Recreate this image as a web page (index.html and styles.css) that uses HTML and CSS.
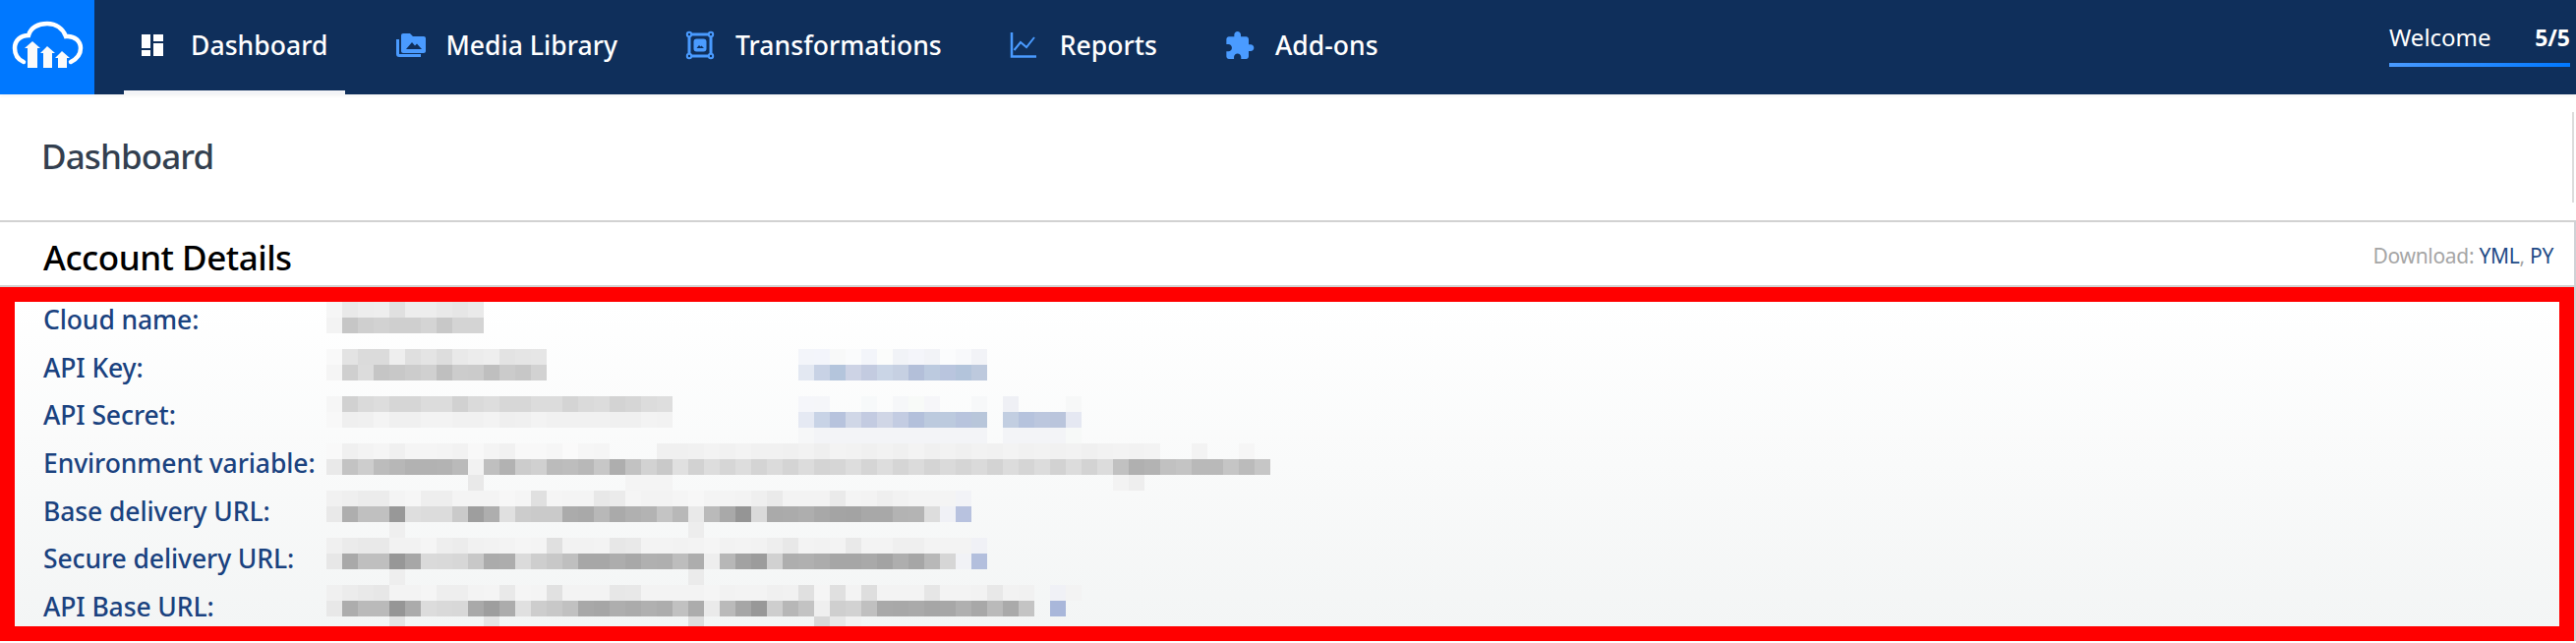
FILE: index.html
```html
<!DOCTYPE html>
<html lang="en">
<head>
<meta charset="utf-8">
<title>Dashboard</title>
<link rel="stylesheet" href="styles.css">
</head>
<body>
<header class="topbar">
  <a class="logo" href="#" aria-label="Cloudinary">
    <svg class="logo-svg" viewBox="0 0 96 96">
      <path class="logo-cloud" d="M24 63C17 60 15 54 15 49C15 41 21 36 29 36C31 28 39 24 48 24C57 24 64 29 67 37C76 36 82 42 82 49C82 55 78 60 72 63"/>
      <path class="logo-arrow" d="M25 49L33 42L41 49H38V69H28V49Z"/>
      <path class="logo-arrow" d="M41 54L48 47L56 54H53V69H44V54Z"/>
      <path class="logo-arrow" d="M56 59L63 52L71 59H68V69H59V59Z"/>
    </svg>
  </a>
  <nav class="mainnav">
    <a class="navitem is-active" href="#">
      <svg class="navicon" viewBox="0 0 30 22"><path class="tile" d="M0 0H9V14H0ZM0 16H9V22H0ZM12 0H22V7H12ZM12 9H22V22H12Z"/></svg>
      <span>Dashboard</span>
    </a>
    <a class="navitem" href="#">
      <svg class="navicon" viewBox="0 0 30 24"><path class="blue" d="M5 2C5 .9 5.900 0 7 0H14L17 3H28C29.100 3 30 3.900 30 5V18C30 19.100 29.100 20 28 20H7C5.900 20 5 19.100 5 18Z"/><path class="dark" d="M10 16L16 9L19 12.500L21 10.500L26 16Z"/><path class="blue-line" d="M1.500 6V21C1.500 22 2 22.500 3 22.500H25"/></svg>
      <span>Media Library</span>
    </a>
    <a class="navitem" href="#">
      <svg class="navicon" viewBox="0 0 30 28"><rect class="blue-line" x="3" y="3" width="22" height="22"/><rect class="navy" x="1" y="1" width="5" height="5"/><rect class="navy" x="22" y="1" width="5" height="5"/><rect class="navy" x="1" y="22" width="5" height="5"/><rect class="navy" x="22" y="22" width="5" height="5"/><rect class="blue" x="7.500" y="7.500" width="13" height="13" rx="3"/><path class="dark" d="M10.500 17L13 14L14.500 15.500L15.500 14.500L18 17Z"/><circle class="ring" cx="3" cy="3" r="2.200"/><circle class="ring" cx="25" cy="3" r="2.200"/><circle class="ring" cx="3" cy="25" r="2.200"/><circle class="ring" cx="25" cy="25" r="2.200"/></svg>
      <span>Transformations</span>
    </a>
    <a class="navitem" href="#">
      <svg class="navicon" viewBox="0 0 30 26"><path class="chart-axis" d="M1 0V24.500H26"/><path class="chart-line" d="M3.500 18L10 10L16 15L24 5"/></svg>
      <span>Reports</span>
    </a>
    <a class="navitem" href="#">
      <svg class="navicon" viewBox="2 1 22 21"><path class="blue" d="M20.500 11H19V7C19 5.900 18.100 5 17 5H13V3.500C13 2.120 11.880 1 10.500 1S8 2.120 8 3.500V5H4C2.900 5 2.010 5.900 2.010 7V10.800H3.500C4.990 10.800 6.200 12.010 6.200 13.500S4.990 16.200 3.500 16.200H2V20C2 21.100 2.900 22 4 22H7.800V20.500C7.800 19.010 9.010 17.800 10.500 17.800C11.990 17.800 13.200 19.010 13.200 20.500V22H17C18.100 22 19 21.100 19 20V16H20.500C21.880 16 23 14.880 23 13.500S21.880 11 20.500 11Z"/></svg>
      <span>Add-ons</span>
    </a>
  </nav>
  <div class="welcome">
    <div class="welcome-text"><span>Welcome</span><strong>5/5</strong></div>
    <div class="welcome-bar"></div>
  </div>
</header>

<section class="pagetitle">
  <h1>Dashboard</h1>
</section>

<section class="card">
  <div class="card-head">
    <h2>Account Details</h2>
    <p class="download">Download: <a href="#">YML</a>, <a href="#">PY</a></p>
  </div>
  <div class="details">
    <div class="detail-row">Cloud name:</div>
    <div class="detail-row">API Key:</div>
    <div class="detail-row">API Secret:</div>
    <div class="detail-row">Environment variable:</div>
    <div class="detail-row">Base delivery URL:</div>
    <div class="detail-row">Secure delivery URL:</div>
    <div class="detail-row">API Base URL:</div>
    <canvas class="mosaic" id="mosaic" width="60" height="21"></canvas>
    <div class="highlight"></div>
  </div>
</section>
<script src="mosaic.js"></script>
</body>
</html>
```

FILE: styles.css
```css
* { box-sizing: border-box; }
html, body { margin: 0; padding: 0; background: #fff; }
body {
  width: 2620px;
  height: 654px;
  overflow: hidden;
  font-family: "Noto Sans", "Open Sans", sans-serif;
}
a { text-decoration: none; color: inherit; }

.topbar {
  display: flex;
  height: 96px;
  background: #0f2f5b;
  color: #fff;
  box-shadow: 0 2px 3px rgba(0, 0, 0, .04);
}
.logo { width: 96px; height: 96px; background: #0078ff; display: block; }
.logo-svg { display: block; width: 96px; height: 96px; }
.logo-cloud { fill: none; stroke: #fff; stroke-width: 4.5; stroke-linecap: round; }
.logo-arrow { fill: #fafafa; }

.mainnav { display: flex; margin-left: 30px; gap: 34px; }
.navitem {
  display: flex;
  align-items: center;
  gap: 20px;
  height: 96px;
  padding: 0 18px 0 18px;
  border-bottom: 4px solid transparent;
  font-size: 26.500px;
  font-weight: 500;
  letter-spacing: .05px;
}
.navitem.is-active { border-bottom-color: #f3f4f7; }
.navicon { width: 30px; height: 28px; flex: none; overflow: visible; }
.tile { fill: #fff; }
.blue { fill: #4a9bff; }
.dark { fill: #0f2f5b; }
.navy { fill: #0f2f5b; }
.blue-line { fill: none; stroke: #4a9bff; stroke-width: 3; }
.ring { fill: #0f2f5b; stroke: #4a9bff; stroke-width: 2; }
.chart-axis { fill: none; stroke: #4a9bff; stroke-width: 2.500; }
.chart-line { fill: none; stroke: #4a9bff; stroke-width: 2; }

.welcome { margin-left: auto; margin-right: 6px; width: 184px; padding-top: 22px; }
.welcome-text {
  display: flex;
  justify-content: space-between;
  height: 42px;
  font-size: 24px;
  line-height: 32px;
}
.welcome-text strong { font-weight: 700; font-size: 23px; }
.welcome-bar { height: 4px; background: linear-gradient(90deg, #4a9bff, #0078ff); }

.pagetitle {
  height: 128px;
  padding: 18px 0;
  margin-right: 2px;
}
.pagetitle h1 {
  margin: 0;
  height: 92px;
  padding: 25px 0 0 42px;
  border-right: 2px solid #dcdcdc;
  font-size: 35px;
  line-height: 40px;
  font-weight: 500;
  letter-spacing: -.9px;
  color: #333f4f;
}

.card {
  height: 428px;
  border-top: 2px solid #d2d2d2;
  border-right: 2px solid #cfd2d6;
  border-bottom: 2px solid #d2d2d2;
}
.card-head {
  display: flex;
  justify-content: space-between;
  align-items: center;
  height: 66px;
  padding: 6px 21px 0 44px;
  border-bottom: 2px solid #d2d2d2;
}
.card-head h2 {
  margin: 0;
  font-size: 35px;
  font-weight: 500;
  letter-spacing: -.5px;
  color: #000;
}
.download { margin: 0 0 3px; font-size: 21px; letter-spacing: -.3px; color: #a6a6a6; }
.download a { color: #1f4b87; }

.details {
  position: relative;
  height: 360px;
  padding: 9px 0 0 44px;
  overflow: hidden;
  background: linear-gradient(#fff 4%, #f3f5f5 96%);
}
.detail-row {
  height: 48.670px;
  line-height: 48.670px;
  font-size: 26.500px;
  font-weight: 500;
  letter-spacing: -.1px;
  color: #1a427f;
}
.mosaic {
  position: absolute;
  left: 332px;
  top: 15px;
  width: 960px;
  height: 336px;
  image-rendering: pixelated;
}
.highlight {
  position: absolute;
  inset: 0;
  border: 15px solid #f00;
}
```

FILE: mosaic.js
```js
// Pixelated (redacted) values: one row per 16px band, [first column, "cell cell ..."].
// A two-digit cell is a grey level, a six-digit cell a full colour.
var BANDS = [
  [[0, "f6 e9 ed ee e0 ed ed e9 e6 ea"]],
  [[0, "f3 c6 cf d2 cf cf d4 c8 d4 d4"]],
  [],
  [[0, "f9 e3 db db ee df e4 dd e9 ec ee e3 e5 e6"], [30, "f3f5fa f3f5fb f8f9f9 fafbfc f3f5fa fbfcfb f1f3f7 f4f5fa f2f3f7 fbfcfd f8f9fb f2f3f7"]],
  [[0, "f5 cf dc c5 c8 cc d0 bf cc cb bf cb c7 d2"], [30, "e3e8f2 c8d2e5 b4c5dc cdd3e5 c3cbe0 cad5e6 c6d0e2 b3bfd9 bccadf b9c5de b3c4db bdc9dd"]],
  [],
  [[0, "f6 d1 da dd d6 d6 dc dc d1 da dd d7 d7 dc dc d4 da dc d3 d6 dc de"], [30, "f5f6fa f5f6f9"], [34, "f7f9fa"], [36, "f6f7f9 f8faf8 f6f6f9"], [41, "f7f8f9"], [43, "eff0f5"], [47, "f7f8f8"]],
  [[0, "f8 ef f0 f4 f0 f0 f3 f3 f1 f1 f3 ef f0 f3 f1 f1 f1 f1 f0 f0 f3 f2"], [30, "e5e9f3 c8d3e6 b7c3dd d0d7e7 c3cbe1 d0d6e6 c3cce2 b3c0db bccade bccade b8c4dd b8c6da"], [43, "c2cee1 b6c3dd bcc7de bac5dc e5e8f2"]],
  [[30, "f6f7f8 f3f4f7 f3f4f7 f3f4f7 f3f4f7 f3f4f7 f3f4f7 f3f4f7 f3f4f7 f3f4f7 f3f4f7 f3f4f7"], [43, "f3f4f7 f3f4f7 f3f4f7 f3f4f7 f7f9f8"]],
  [[0, "f9 f0 f3 f5 f0 f5 f5 f4 f2 f8 f4 f1 f8 f8 f6 fa f6 f5"], [21, "f0 f0 f1 f3 f1 f3 f1 f1 f0 f2 ef f3 f2 f0 f2 f0 f3 f0 f2 f0 f2 f1 f3 f1 f2 f1 f2 f0 f2 f3 f2 f3"], [55, "f3"], [58, "f6"]],
  [[0, "e9 c3 cd bc b7 b2 b2 b3 ba f2 bf b2 cc d0 bb bd b8 c7 ae c2 d2 c9 e0 d2 dd d6 dd d4 db d4 dc d4 d6 dd d5 dd d5 db d4 da d5 da d3 dc d5 dc d2 dc d3 dc c1 b0 b3 c1 c4 b9 b9 c5 bb c6"]],
  [[9, "e9"], [19, "f4 f4 f4"], [50, "f3 ee"]],
  [[0, "f1 ef ec ec f4 f6 ee ee f4 f4 f4 f7 f5 e0 f5 f4 f4 e8 eb f5 f3 f3 f5 f7 f4 f4 f3 ef ea f3 f3 f3 ea f4 f3 ef f2 f4 f4 f4 f2f3f7"]],
  [[0, "e9 ae c0 c0 98 de dc dc ca 9e ae e0 cc ca ca ab a9 b8 aa b0 b3 c4 b8 e9 ba a9 95 da aa ab ae a8 a4 a3 a8 a8 b3 b4 dd f0f1f6 b8c2df"]],
  [[4, "ef"], [23, "ed"]],
  [[0, "f0 eb e9 e9 f2 f2 f5 ee ec f1 f2 f3 f5 f4 e0 f2 f2 f3 e7 e9 f3 f3 f2 f3 f5 f2 f3 f2 ee e8 f3 f2 f3 e9 f3 f3 ef ef f3 f3 f3 f0f1f6"]],
  [[0, "e7 a9 bf bf 97 a7 da d9 d7 c8 ab ad db ce c8 bf a7 a7 ad a8 b0 af bd ad ee b7 a2 9c d1 ae b0 ac a6 a6 a9 a3 ae a6 b8 d6 f1f2f6 b3bfdd"]],
  [[4, "ee"], [23, "eb"]],
  [[0, "f0 ec e9 e7 f3 f3 f5 ee ee f3 f4 e9 f5 f4 e1 f3 f3 f3 e7 e8 f3 f3 f3 f3 f5 f2 f3 f3 f0 f1 e0 f5 e0 f3 de f3 f3 f3 e6 f3 f3 f2 e8 f2 f1"], [46, "f0f1f6 f3"]],
  [[0, "e8 ad ba ba 96 ab dc d9 d8 a9 9e ac e0 cd c8 c1 a8 a6 ae ab b0 ad c1 ac ea ba a6 98 ce b7 c3 ef cf d2 c0 a9 a8 aa a6 a7 b0 a8 ba aa c4"], [46, "a9b7da"]],
  [[4, "e4"], [10, "e5"], [23, "dd"], [31, "d8 e8 f2"]]
];

(function () {
  var ctx = document.getElementById("mosaic").getContext("2d");
  BANDS.forEach(function (segments, y) {
    segments.forEach(function (segment) {
      segment[1].split(" ").forEach(function (cell, i) {
        ctx.fillStyle = "#" + (cell.length === 2 ? cell + cell + cell : cell);
        ctx.fillRect(segment[0] + i, y, 1, 1);
      });
    });
  });
})();
```
